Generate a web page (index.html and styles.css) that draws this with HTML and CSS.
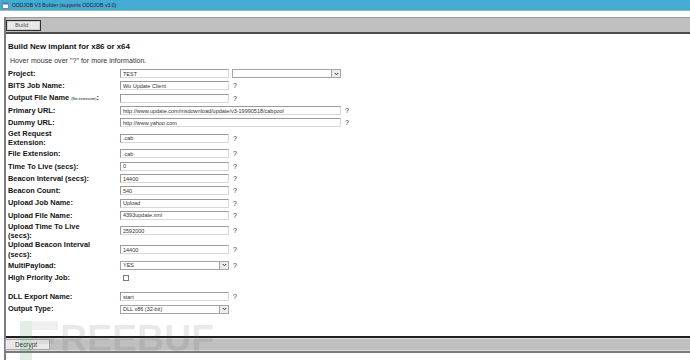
FILE: index.html
```html
<!DOCTYPE html>
<html lang="en">
<head>
<meta charset="utf-8">
<title>ODDJOB V3 Builder</title>
<link rel="stylesheet" href="styles.css">
</head>
<body>
<div class="window">
  <div class="titlebar">
    <svg class="appicon" width="7" height="7" viewBox="0 0 7 7"><rect x="0.5" y="0.5" width="6" height="6" fill="#fff" stroke="#6d8c99"/><rect x="1" y="1" width="5" height="1.5" fill="#3a7fb5"/></svg>
    <span class="title">ODDJOB V3 Builder (supports ODDJOB v3.0)</span>
  </div>
  <div class="gapstrip"></div>
  <div class="frame">
    <div class="toolbar"><button class="btn btn-build">Build</button></div>
    <div class="content">
      <h1 class="heading">Build New implant for x86 or x64</h1>
      <p class="hint">Hover mouse over "?" for more information.</p>
      <div class="form">
        <div class="row"><span class="lbl">Project:</span><div class="field"><input class="txt" value="TEST"><div class="select sel-second"><span class="sel-val"></span><span class="sel-arrow"><svg width="5" height="4" viewBox="0 0 5 4"><path d="M0.8 1 L2.5 2.8 L4.2 1" fill="none" stroke="#333" stroke-width="1"/></svg></span></div></div></div>
        <div class="row"><span class="lbl">BITS Job Name:</span><div class="field"><input class="txt" value="Wu Update Client"><span class="q">?</span></div></div>
        <div class="row"><span class="lbl">Output File Name <span class="small">(No extension)</span>:</span><div class="field"><input class="txt" value=""><span class="q">?</span></div></div>
        <div class="row"><span class="lbl">Primary URL:</span><div class="field"><input class="txt wide" value="http://www.update.com/msdownload/update/v3-19990518/cabpool"><span class="q">?</span></div></div>
        <div class="row"><span class="lbl">Dummy URL:</span><div class="field"><input class="txt wide" value="http://www.yahoo.com"><span class="q">?</span></div></div>
        <div class="row tall"><span class="lbl">Get Request<br>Extension:</span><div class="field"><input class="txt" value=".cab"><span class="q">?</span></div></div>
        <div class="row"><span class="lbl">File Extension:</span><div class="field"><input class="txt" value=".cab"><span class="q">?</span></div></div>
        <div class="row"><span class="lbl">Time To Live (secs):</span><div class="field"><input class="txt" value="0"><span class="q">?</span></div></div>
        <div class="row"><span class="lbl">Beacon Interval (secs):</span><div class="field"><input class="txt" value="14400"><span class="q">?</span></div></div>
        <div class="row"><span class="lbl">Beacon Count:</span><div class="field"><input class="txt" value="540"><span class="q">?</span></div></div>
        <div class="row"><span class="lbl">Upload Job Name:</span><div class="field"><input class="txt" value="Upload"><span class="q">?</span></div></div>
        <div class="row"><span class="lbl">Upload File Name:</span><div class="field"><input class="txt" value="4393update.xml"><span class="q">?</span></div></div>
        <div class="row tall"><span class="lbl">Upload Time To Live<br>(secs):</span><div class="field"><input class="txt" value="2592000"><span class="q">?</span></div></div>
        <div class="row tall"><span class="lbl">Upload Beacon Interval<br>(secs):</span><div class="field"><input class="txt" value="14400"><span class="q">?</span></div></div>
        <div class="row"><span class="lbl">MultiPayload:</span><div class="field"><div class="select"><span class="sel-val">YES</span><span class="sel-arrow"><svg width="5" height="4" viewBox="0 0 5 4"><path d="M0.8 1 L2.5 2.8 L4.2 1" fill="none" stroke="#333" stroke-width="1"/></svg></span></div><span class="q">?</span></div></div>
        <div class="row"><span class="lbl">High Priority Job:</span><div class="field"><span class="check"></span></div></div>
        <div class="row spaced"><span class="lbl">DLL Export Name:</span><div class="field"><input class="txt" value="start"><span class="q">?</span></div></div>
        <div class="row"><span class="lbl">Output Type:</span><div class="field"><div class="select"><span class="sel-val">DLL x86 (32-bit)</span><span class="sel-arrow"><svg width="5" height="4" viewBox="0 0 5 4"><path d="M0.8 1 L2.5 2.8 L4.2 1" fill="none" stroke="#333" stroke-width="1"/></svg></span></div></div></div>
      </div>
    </div>
    <div class="bottombar"><button class="btn btn-decrypt">Decrypt</button></div>
    <div class="footer"></div>
  </div>
  <div class="watermark">
    <svg class="wm-logo" width="42" height="42" viewBox="0 0 42 42"><rect x="2" y="3" width="12" height="39" fill="rgba(60,150,100,0.16)"/><rect x="14" y="3" width="26" height="9" fill="rgba(80,80,80,0.09)"/><rect x="14" y="18" width="22" height="8" fill="rgba(80,80,80,0.09)"/></svg>
    <span class="wm-text">REEBUF</span>
  </div>
</div>
</body>
</html>
```

FILE: styles.css
```css
* { box-sizing: border-box; }

body {
  margin: 0;
  width: 690px;
  height: 360px;
  overflow: hidden;
  background: #fff;
  font-family: "Liberation Sans", Arial, sans-serif;
  color: #111;
}

.window {
  position: relative;
  height: 360px;
  display: flex;
  flex-direction: column;
}

.titlebar {
  height: 11px;
  flex: none;
  background: #46abd3;
  border-bottom: 1px solid #9fb3bb;
  display: flex;
  align-items: center;
  padding-left: 2px;
  gap: 3px;
}

.appicon { display: block; }

.title {
  font-size: 5px;
  line-height: 10px;
  color: #17262d;
  letter-spacing: 0.05px;
}

.gapstrip { height: 6px; flex: none; }

.frame {
  flex: 1;
  margin-left: 4px;
  border-left: 2px solid #7d7d7d;
  display: flex;
  flex-direction: column;
  min-height: 0;
}

.toolbar {
  flex: none;
  height: 17px;
  background: #c0c0c0;
  border-top: 1px solid #9a9a9a;
  border-bottom: 2px solid #4e4e4e;
  display: flex;
  align-items: center;
}

.btn {
  appearance: none;
  margin: 0;
  font-family: inherit;
  font-size: 6px;
  line-height: 9px;
  color: #555;
  background: #e8e8e8;
  border: 1px solid #a8a8a8;
  height: 11px;
  padding: 0;
  text-align: left;
}

.btn-build {
  width: 35px;
  padding-left: 8px;
  border: 1px solid #2e2e2e;
  box-shadow: inset 0 0 0 1px #cfcfcf;
}

.btn-decrypt {
  width: 45px;
  padding-left: 9px;
  font-size: 6.4px;
  color: #333;
  margin-left: -1px;
}

.content {
  flex: 1;
  padding-left: 2px;
  min-height: 0;
}

.heading {
  margin: 7px 0 0;
  font-size: 7.9px;
  line-height: 12px;
  font-weight: bold;
  color: #111;
}

.hint {
  margin: 3px 0 0;
  padding-left: 2px;
  font-size: 7.1px;
  line-height: 10px;
  color: #333;
}

.form { margin-top: 1.5px; }

.row {
  display: flex;
  align-items: center;
  height: 12.3px;
}

.row.tall { height: 18.8px; }
.row.spaced { margin-top: 7px; }

.lbl {
  flex: none;
  width: 112px;
  font-weight: bold;
  font-size: 7.4px;
  line-height: 9.4px;
  color: #141414;
  white-space: nowrap;
}

.small {
  font-weight: normal;
  font-size: 3.9px;
}

.field {
  display: flex;
  align-items: center;
}

.txt {
  appearance: none;
  margin: 0;
  width: 109px;
  height: 9px;
  border: 1px solid;
  border-color: #9a9a9a #d8d8d8 #d8d8d8 #9a9a9a;
  padding: 0 2px;
  font-family: "Liberation Sans", Arial, sans-serif;
  font-size: 5.5px;
  color: #333;
  background: #fff;
  outline: none;
}

.txt.wide { width: 221px; }

.q {
  font-size: 7px;
  line-height: 9px;
  margin-left: 4px;
  color: #333;
}

.select {
  width: 109px;
  height: 9px;
  border: 1px solid #a5a5a5;
  display: flex;
  background: #fff;
}

.sel-second { margin-left: 3px; }

.sel-val {
  flex: 1;
  font-size: 5.5px;
  line-height: 7px;
  padding-left: 2px;
  color: #333;
}

.sel-arrow {
  width: 9px;
  border-left: 1px solid #a5a5a5;
  background: #ececec;
  display: flex;
  align-items: center;
  justify-content: center;
}

.sel-arrow svg { display: block; }

.check {
  width: 6px;
  height: 6px;
  margin-left: 3px;
  border: 1px solid #7a7a7a;
  background: #fff;
}

.bottombar {
  flex: none;
  height: 17px;
  background: #c0c0c0;
  border-top: 2px solid #1e1e1e;
  border-bottom: 2px solid #7a7a7a;
  box-shadow: inset 0 1px 0 #dcdcdc, inset 0 -1px 0 #dcdcdc;
  display: flex;
  align-items: center;
}

.footer { flex: none; height: 7px; }

.watermark {
  position: absolute;
  left: 0;
  top: 0;
  width: 0;
  height: 0;
  pointer-events: none;
}

.wm-logo {
  position: absolute;
  left: 18px;
  top: 318px;
}

.wm-text {
  position: absolute;
  left: 60px;
  top: 320px;
  font-family: "Liberation Sans", Arial, sans-serif;
  font-weight: bold;
  font-size: 37.5px;
  line-height: 37.5px;
  color: rgba(80, 80, 80, 0.13);
  white-space: nowrap;
}
```
